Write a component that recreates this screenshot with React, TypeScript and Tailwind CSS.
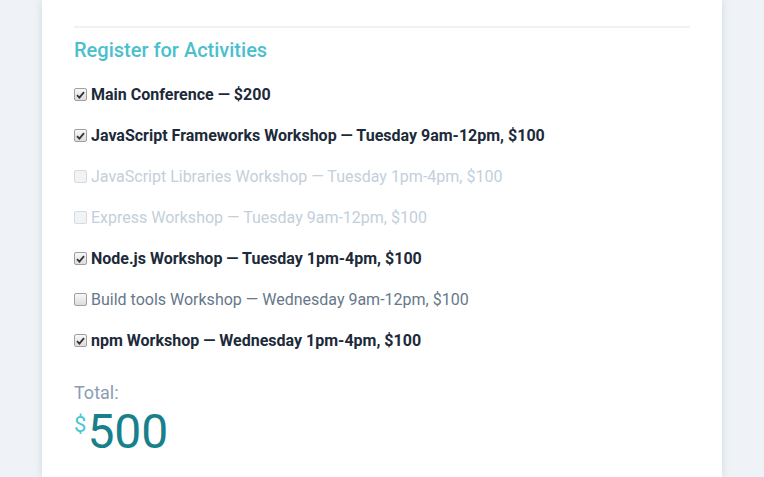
import React from "react";

type Item = { label: string; checked: boolean; disabled: boolean };

const items: Item[] = [
  { label: "Main Conference — $200", checked: true, disabled: false },
  { label: "JavaScript Frameworks Workshop — Tuesday 9am-12pm, $100", checked: true, disabled: false },
  { label: "JavaScript Libraries Workshop — Tuesday 1pm-4pm, $100", checked: false, disabled: true },
  { label: "Express Workshop — Tuesday 9am-12pm, $100", checked: false, disabled: true },
  { label: "Node.js Workshop — Tuesday 1pm-4pm, $100", checked: true, disabled: false },
  { label: "Build tools Workshop — Wednesday 9am-12pm, $100", checked: false, disabled: false },
  { label: "npm Workshop — Wednesday 1pm-4pm, $100", checked: true, disabled: false },
];

function Box({ checked, disabled }: { checked: boolean; disabled: boolean }) {
  return (
    <span
      className={
        "flex h-[13px] w-[13px] shrink-0 items-center justify-center rounded-[2px] border " +
        (disabled
          ? "border-[#d6dbe0] bg-[#f1f3f5]"
          : "border-[#9aa0a6] bg-gradient-to-b from-[#f8f8f8] to-[#dcdcdc]")
      }
    >
      {checked && (
        <svg width="9" height="8" viewBox="0 0 9 8">
          <path d="M1 4.2 L3.4 6.6 L8 1.2" fill="none" stroke="#333" strokeWidth="1.8" />
        </svg>
      )}
    </span>
  );
}

export default function App() {
  return (
    <div className="flex h-[477px] w-full justify-center overflow-hidden bg-[#eff3f7] font-['Roboto',sans-serif]">
      <div className="h-full w-[680px] bg-white px-[32px] shadow-[0_0_8px_rgba(120,140,160,0.25)]">
        <div className="mt-[26px] h-[2px] w-[616px] bg-[#eef3f4]" />
        <h2 className="mt-[9px] text-[20px] font-medium leading-[26px] text-[#4bbfcc]">Register for Activities</h2>
        <div className="mt-[11px] flex flex-col">
          {items.map((it, i) => (
            <label key={i} className="flex h-[41px] items-center gap-[4px]">
              <Box checked={it.checked} disabled={it.disabled} />
              <span
                className={
                  "text-[16px] " +
                  (it.checked
                    ? "font-bold text-[#1c2a3a]"
                    : it.disabled
                    ? "text-[#c3cfdb]"
                    : "text-[#66788a]")
                }
              >
                {it.label}
              </span>
            </label>
          ))}
        </div>
        <div className="mt-[21px] text-[18px] leading-[22px] text-[#8a9db2]">Total:</div>
        <div className="mt-[2px] flex items-start">
          <span className="mt-[7px] text-[22px] leading-[24px] text-[#4bc6d2]">$</span>
          <span className="ml-[1px] text-[48px] leading-[52px] text-[#16818c]">500</span>
        </div>
      </div>
    </div>
  );
}
